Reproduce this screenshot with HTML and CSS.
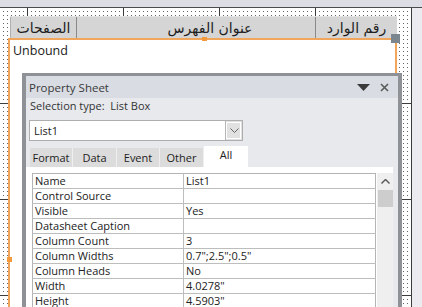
FILE: index.html
```html
<!DOCTYPE html>
<html lang="en">
<head>
    <meta charset="UTF-8">
    <meta name="viewport" content="width=device-width, initial-scale=1.0">
    <title>Report Design - Property Sheet</title>
    <link rel="stylesheet" href="styles.css">
</head>
<body>
    <div class="app">
        <div class="topbar"></div>
        <div class="workspace">
            <div class="canvas">
                <div class="header-row" dir="rtl">
                    <div class="header-cell cell-number">رقم الوارد</div>
                    <div class="header-cell cell-title">عنوان الفهرس</div>
                    <div class="header-cell cell-pages">الصفحات</div>
                </div>
                <div class="selected-control">
                    <span class="handle handle-corner"></span>
                    <span class="handle handle-top"></span>
                    <span class="handle handle-left"></span>
                    <div class="control-label">Unbound</div>
                </div>
            </div>
            <div class="gutter"></div>
        </div>

        <div class="property-sheet">
            <div class="sheet-title">
                <span>Property Sheet</span>
                <div class="title-buttons">
                    <svg class="menu-arrow" width="13" height="7" viewBox="0 0 13 7"><path d="M0 0h13L6.5 7z" fill="#3a3a3a"/></svg>
                    <svg class="close-icon" width="9" height="9" viewBox="0 0 9 9"><path d="M1 1l7 7M8 1L1 8" stroke="#5a5a5a" stroke-width="1.6"/></svg>
                </div>
            </div>
            <div class="selection-type">Selection type:&nbsp; List Box</div>
            <div class="combo">
                <span class="combo-value">List1</span>
                <span class="combo-button">
                    <svg width="9" height="5" viewBox="0 0 9 5"><path d="M0.5 0.5l4 4 4-4" fill="none" stroke="#666" stroke-width="1"/></svg>
                </span>
            </div>
            <div class="tabs">
                <span class="tab">Format</span>
                <span class="tab">Data</span>
                <span class="tab">Event</span>
                <span class="tab">Other</span>
                <span class="tab active">All</span>
            </div>
            <div class="tab-page">
                <table class="props">
                    <tr><td>Name</td><td>List1</td></tr>
                    <tr><td>Control Source</td><td></td></tr>
                    <tr><td>Visible</td><td>Yes</td></tr>
                    <tr><td>Datasheet Caption</td><td></td></tr>
                    <tr><td>Column Count</td><td>3</td></tr>
                    <tr><td>Column Widths</td><td>0.7";2.5";0.5"</td></tr>
                    <tr><td>Column Heads</td><td>No</td></tr>
                    <tr><td>Width</td><td>4.0278"</td></tr>
                    <tr><td>Height</td><td>4.5903"</td></tr>
                </table>
                <div class="scrollbar">
                    <svg class="scroll-up" width="9" height="5" viewBox="0 0 9 5"><path d="M0.5 4.5l4-4 4 4" fill="none" stroke="#555" stroke-width="1.4"/></svg>
                    <div class="scroll-thumb"></div>
                </div>
            </div>
        </div>
    </div>
</body>
</html>
```

FILE: styles.css
```css
/* Global Styles */
body {
    margin: 0;
    font-family: 'Open Sans', 'Noto Sans', sans-serif;
    color: #222;
    overflow: hidden;
}

.app {
    position: relative;
    width: 422px;
    height: 307px;
    overflow: hidden;
}

/* Top Bar */
.topbar {
    height: 7px;
    background-color: #dddde5;
    border-bottom: 1px solid #4a4a4a;
}

.workspace {
    display: flex;
    height: 299px;
}

/* Design Canvas: dots every 4px, inch lines every 96px */
.canvas {
    width: 412px;
    flex-shrink: 0;
    padding-top: 8px;
    box-sizing: border-box;
    background-color: #fff;
    background-image:
        linear-gradient(to right, #3c3c3c 1px, transparent 1px),
        linear-gradient(to bottom, #3c3c3c 1px, transparent 1px),
        linear-gradient(to right, transparent 1px, #fff 1px),
        linear-gradient(to bottom, #666 1px, #fff 1px);
    background-size: 96px 100%, 100% 96px, 4px 100%, 100% 4px;
    background-position: 27px 0, 0 95px, 3px 0, 0 3px;
}

.gutter {
    flex: 1;
    background-color: #ececf0;
}

/* Header Labels */
.header-row {
    display: flex;
    margin-left: 10px;
    width: 387px;
    height: 22px;
    background-color: #d5d5d5;
    border-top: 1px solid #e4e4e4;
    box-sizing: border-box;
}

.header-cell {
    display: flex;
    align-items: center;
    justify-content: center;
    font-family: 'DejaVu Sans', sans-serif;
    font-size: 14px;
    color: #1e1e1e;
    border-left: 1px solid #8a8a8a;
    box-sizing: border-box;
}

.cell-number {
    width: 82px;
}

.cell-title {
    width: 239px;
    padding-left: 28px;
}

.cell-pages {
    width: 66px;
    border-left-color: #b0b0b0;
}

/* Selected Control */
.selected-control {
    position: relative;
    margin-left: 8px;
    width: 389px;
    height: 300px;
    background-color: #fff;
    border: 2px solid #f2a65c;
    box-sizing: border-box;
}

.control-label {
    padding: 3px 0 0 3px;
    font-size: 12.5px;
    line-height: 16px;
    color: #1a1a1a;
}

.handle {
    position: absolute;
}

.handle-corner {
    top: -6px;
    right: -5px;
    width: 9px;
    height: 9px;
    background-color: #7b868e;
}

.handle-top {
    top: -3px;
    left: 192px;
    width: 5px;
    height: 4px;
    background-color: #f59a3c;
}

.handle-left {
    top: 217px;
    left: -3px;
    width: 5px;
    height: 5px;
    background-color: #f59a3c;
}

/* Property Sheet */
.property-sheet {
    position: absolute;
    left: 22px;
    top: 73px;
    width: 380px;
    height: 240px;
    background-color: #e7e9ed;
    border-style: solid;
    border-color: #8e9296;
    border-width: 3px 4px;
    box-sizing: border-box;
    font-size: 11px;
}

.sheet-title {
    display: flex;
    align-items: center;
    justify-content: space-between;
    height: 22px;
    padding: 0 9px 0 3px;
    background-color: #d9dde3;
    font-size: 11.5px;
    color: #3a3a3a;
}

.title-buttons {
    display: flex;
    align-items: center;
    gap: 10px;
}

.selection-type {
    height: 16px;
    line-height: 16px;
    padding-left: 4px;
    color: #333;
}

.combo {
    display: flex;
    margin: 6px 0 0 3px;
    width: 214px;
    height: 21px;
    background-color: #fff;
    border: 1px solid #aeaeae;
    box-sizing: border-box;
}

.combo-value {
    flex: 1;
    padding-left: 4px;
    line-height: 19px;
}

.combo-button {
    display: flex;
    align-items: center;
    justify-content: center;
    width: 16px;
    background-color: #e1e1e1;
    border-left: 1px solid #b5b5b5;
    outline: 1px solid #fff;
    outline-offset: -2px;
}

/* Tabs */
.tabs {
    display: flex;
    align-items: flex-end;
    margin-top: 5px;
    padding-left: 4px;
    height: 21px;
}

.tab {
    width: 42px;
    height: 19px;
    line-height: 19px;
    text-align: center;
    background-color: #dcdcdc;
    border-right: 1px solid #efefef;
    color: #222;
}

.tab:nth-child(2),
.tab:nth-child(4) {
    width: 43px;
}

.tab.active {
    width: 44px;
    height: 21px;
    line-height: 17px;
    background-color: #fff;
    border-right: none;
}

.tab-page {
    display: flex;
    align-items: flex-start;
    gap: 1px;
    margin-right: 5px;
    height: 200px;
    padding: 6px 0 0 6px;
    background-color: #fff;
    box-sizing: border-box;
}

/* Property Grid */
.props {
    width: 344px;
    border-collapse: collapse;
    border: 1px solid #b4b4b4;
    color: #222;
}

.props td {
    height: 14px;
    padding: 0 0 0 2px;
    line-height: 14px;
    border-bottom: 1px solid #bdbdbd;
    white-space: nowrap;
}

.props td:first-child {
    width: 148px;
    border-right: 1px solid #bdbdbd;
}

.scrollbar {
    display: flex;
    flex-direction: column;
    align-items: center;
    width: 16px;
    height: 140px;
    background-color: #efefef;
}

.scroll-up {
    margin-top: 6px;
}

.scroll-thumb {
    margin-top: 6px;
    width: 15px;
    height: 17px;
    background-color: #cdcdcd;
}
```
